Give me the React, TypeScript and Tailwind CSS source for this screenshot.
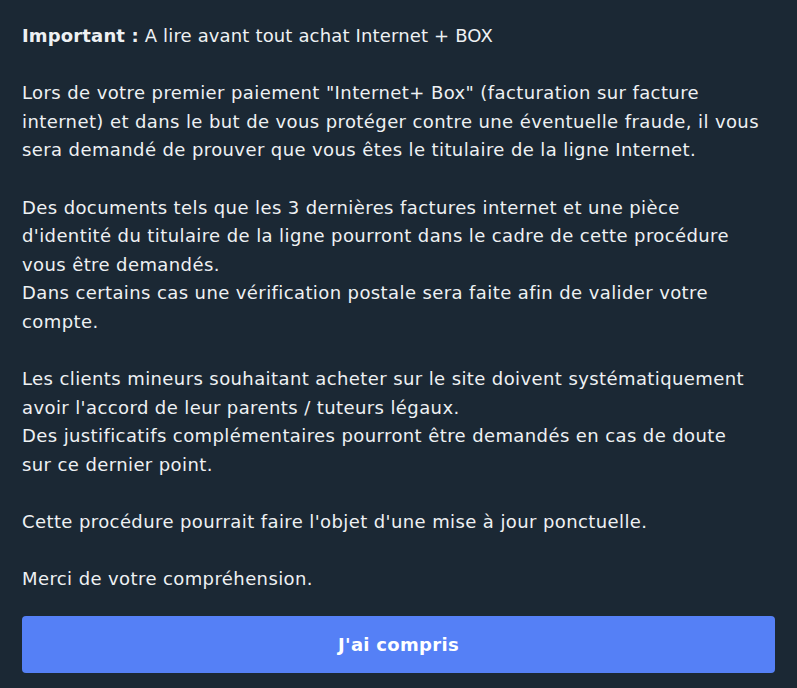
const paragraphs: string[][] = [
  [
    'Lors de votre premier paiement "Internet+ Box" (facturation sur facture',
    "internet) et dans le but de vous protéger contre une éventuelle fraude, il vous",
    "sera demandé de prouver que vous êtes le titulaire de la ligne Internet.",
  ],
  [
    "Des documents tels que les 3 dernières factures internet et une pièce",
    "d'identité du titulaire de la ligne pourront dans le cadre de cette procédure",
    "vous être demandés.",
    "Dans certains cas une vérification postale sera faite afin de valider votre",
    "compte.",
  ],
  [
    "Les clients mineurs souhaitant acheter sur le site doivent systématiquement",
    "avoir l'accord de leur parents / tuteurs légaux.",
    "Des justificatifs complémentaires pourront être demandés en cas de doute",
    "sur ce dernier point.",
  ],
  ["Cette procédure pourrait faire l'objet d'une mise à jour ponctuelle."],
  ["Merci de votre compréhension."],
];

const App = () => {
  return (
    <main className="min-h-[688px] w-full bg-[#1b2834] px-[22px] pt-[22px] pb-[13px] text-[#eef1f3] font-['DejaVu_Sans',sans-serif]">
      <div className="flex flex-col gap-[28.6px] text-[18px] leading-[28.6px] tracking-[0.4px]">
        <p className="whitespace-nowrap tracking-[0.15px]">
          <span className="font-bold">Important :</span> A lire avant tout achat
          Internet + BOX
        </p>
        {paragraphs.map((lines, i) => (
          <p key={i}>
            {lines.map((line) => (
              <span key={line} className="block whitespace-nowrap">
                {line}
              </span>
            ))}
          </p>
        ))}
      </div>
      {/* Confirm button */}
      <button className="mt-[22px] h-[57px] w-full rounded-[4px] bg-[#5580f6] text-[18px] tracking-[0.3px] font-bold text-white">
        J'ai compris
      </button>
    </main>
  );
};

export default App;
